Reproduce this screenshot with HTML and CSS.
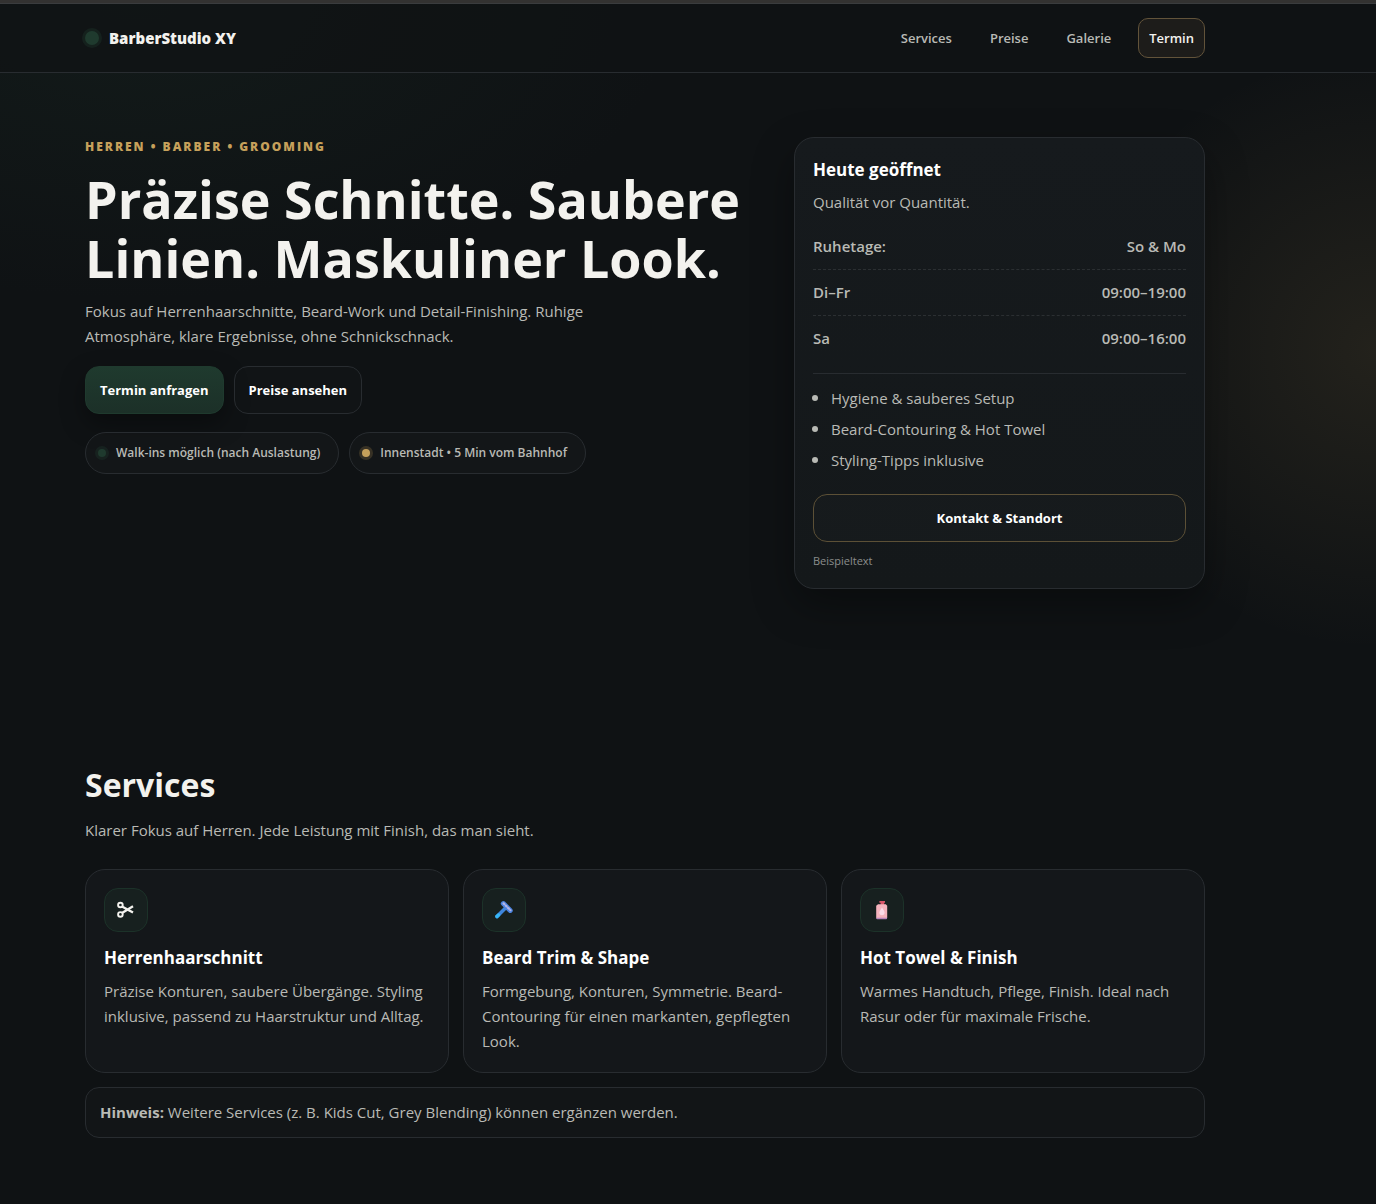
FILE: index.html
```
<!DOCTYPE html>
<html lang="de">
<head>
    <meta charset="UTF-8">
    <meta name="viewport" content="width=device-width, initial-scale=1">
    <title>BarberStudio XY</title>
    <link rel="stylesheet" href="styles.css">
</head>
<body>
    <header class="site-header">
        <div class="container header-inner">
            <a class="brand" href="#"><span class="brand-dot"></span>BarberStudio XY</a>
            <nav class="nav">
                <a href="#services">Services</a>
                <a href="#preise">Preise</a>
                <a href="#galerie">Galerie</a>
                <a class="nav-cta" href="#termin">Termin</a>
            </nav>
        </div>
    </header>

    <main>
        <section class="hero">
            <div class="container hero-grid">
                <div class="hero-text">
                    <p class="eyebrow">Herren • Barber • Grooming</p>
                    <h1>Präzise Schnitte. Saubere Linien. Maskuliner Look.</h1>
                    <p class="lead">Fokus auf Herrenhaarschnitte, Beard-Work und Detail-Finishing. Ruhige Atmosphäre, klare Ergebnisse, ohne Schnickschnack.</p>
                    <div class="actions">
                        <a class="btn btn-primary" href="#termin">Termin anfragen</a>
                        <a class="btn" href="#preise">Preise ansehen</a>
                    </div>
                    <div class="pills">
                        <span class="pill"><i class="dot"></i>Walk-ins möglich (nach Auslastung)</span>
                        <span class="pill"><i class="dot dot-gold"></i>Innenstadt • 5 Min vom Bahnhof</span>
                    </div>
                </div>

                <aside class="info-card">
                    <h3>Heute geöffnet</h3>
                    <p>Qualität vor Quantität.</p>
                    <table class="hours">
                        <tr><th scope="row">Ruhetage:</th><td>So &amp; Mo</td></tr>
                        <tr><th scope="row">Di–Fr</th><td>09:00–19:00</td></tr>
                        <tr><th scope="row">Sa</th><td>09:00–16:00</td></tr>
                    </table>
                    <ul class="perks">
                        <li>Hygiene &amp; sauberes Setup</li>
                        <li>Beard-Contouring &amp; Hot Towel</li>
                        <li>Styling-Tipps inklusive</li>
                    </ul>
                    <a class="btn btn-gold" href="#kontakt">Kontakt &amp; Standort</a>
                    <p class="small">Beispieltext</p>
                </aside>
            </div>
        </section>

        <section class="services" id="services">
            <div class="container">
                <h2>Services</h2>
                <p class="section-lead">Klarer Fokus auf Herren. Jede Leistung mit Finish, das man sieht.</p>
                <div class="cards">
                    <article class="card">
                        <div class="icon">
                            <svg width="20" height="18" viewBox="0 0 20 18" fill="none" stroke="#f3f2ee">
                                <circle cx="4.4" cy="4" r="2.3" stroke-width="1.9"/>
                                <circle cx="4.4" cy="13.4" r="2.3" stroke-width="1.9"/>
                                <path d="M6 5.4 17 11.6M6 12 17 5.2" stroke-width="2.3"/>
                            </svg>
                        </div>
                        <h3>Herrenhaarschnitt</h3>
                        <p>Präzise Konturen, saubere Übergänge. Styling inklusive, passend zu Haarstruktur und Alltag.</p>
                    </article>
                    <article class="card">
                        <div class="icon">
                            <svg width="20" height="20" viewBox="0 0 20 20" stroke-linecap="round">
                                <path d="M3 16.6 11.5 8.1" stroke="#3f86dd" stroke-width="3.6"/>
                                <path d="M3 16.6 4.5 15.1" stroke="#35b5f5" stroke-width="3.6"/>
                                <path d="M9.4 3.6 16.2 10.4" stroke="#4a83e0" stroke-width="5"/>
                                <path d="M9.6 3.4 16.4 10.2" stroke="#b3b4e6" stroke-width="2.2" stroke-dasharray="1 2.2"/>
                            </svg>
                        </div>
                        <h3>Beard Trim &amp; Shape</h3>
                        <p>Formgebung, Konturen, Symmetrie. Beard-Contouring für einen markanten, gepflegten Look.</p>
                    </article>
                    <article class="card">
                        <div class="icon">
                            <svg width="20" height="20" viewBox="0 0 20 20">
                                <path d="M7.4 1H13v1.8h-.8V5H8.6V2.8H7.4z" fill="#d9566a"/>
                                <path d="M6 4.2h7.8l1.4 1.6v12a1 1 0 0 1-1 1H5.2a1 1 0 0 1-1-1v-12z" fill="#f5b3bd"/>
                                <path d="M4.4 17.8H15v.6a.8.8 0 0 1-.8.8H5.2a.8.8 0 0 1-.8-.8z" fill="#b784bb"/>
                                <path d="M10 7.4c1.6 2.4 2.6 3.8 2.6 5.2a2.6 2.6 0 0 1-5.2 0c0-1.4 1-2.8 2.6-5.2z" fill="#fbdbe8"/>
                            </svg>
                        </div>
                        <h3>Hot Towel &amp; Finish</h3>
                        <p>Warmes Handtuch, Pflege, Finish. Ideal nach Rasur oder für maximale Frische.</p>
                    </article>
                </div>
                <div class="notice"><strong>Hinweis:</strong> Weitere Services (z. B. Kids Cut, Grey Blending) können ergänzen werden.</div>
            </div>
        </section>
    </main>
</body>
</html>
```
FILE: styles.css
```
:root {
    --bg: #0f1214;
    --text: #f3f2ee;
    --muted: #b9bab5;
    --line: #282c30;
    --green: #1f3a2e;
    --gold: #c6a15b;
}
* {
    margin: 0;
    padding: 0;
    box-sizing: border-box;
}
body {
    min-height: 100vh;
    font-family: "Open Sans", "Noto Sans", sans-serif;
    font-size: 15px;
    line-height: 25px;
    color: var(--text);
    background:
        radial-gradient(900px 500px at 10% 0, rgba(31, 58, 46, .22), transparent 60%),
        radial-gradient(500px 500px at 100% 350px, rgba(198, 161, 91, .11), transparent 60%),
        var(--bg);
}
a {
    color: inherit;
    text-decoration: none;
}
h3 {
    font-size: 17px;
    line-height: 28px;
}
.container {
    max-width: 1120px;
    margin: 0 86px 0 85px;
}

/* header */
.site-header {
    padding-top: 1px;
    border-top: 3px solid #333231;
    border-bottom: 1px solid var(--line);
    background: rgba(15, 18, 20, .7);
    box-shadow: inset 0 1px #3a3c3e;
}
.header-inner {
    display: flex;
    align-items: center;
    justify-content: space-between;
    padding: 14px 0;
}
.brand {
    display: flex;
    align-items: center;
    gap: 10px;
    font-weight: 800;
}
.brand-dot {
    width: 14px;
    height: 14px;
    border-radius: 50%;
    background: var(--green);
    box-shadow: 0 0 0 3px rgba(31, 58, 46, .35);
}
.nav {
    display: flex;
    gap: 16px;
    font-size: 13px;
    font-weight: 600;
    line-height: 18px;
    color: var(--muted);
}
.nav a {
    padding: 10px;
    border: 1px solid transparent;
    border-radius: 10px;
}
.nav .nav-cta {
    color: var(--text);
    border-color: #62533a;
    background: #1d1c1a;
}

/* hero */
.hero {
    padding: 64px 0;
}
.hero-grid {
    display: grid;
    grid-template-columns: 5fr 3fr;
    gap: 24px;
}
.eyebrow {
    font-size: 12px;
    font-weight: 800;
    line-height: 20px;
    letter-spacing: 2px;
    text-transform: uppercase;
    color: var(--gold);
}
h1 {
    margin: 12px 0;
    font-size: 52px;
    line-height: 59px;
}
.lead {
    max-width: 540px;
    color: var(--muted);
}
.actions,
.pills {
    display: flex;
    flex-wrap: wrap;
    gap: 10px;
}
.actions {
    margin: 17px 0 18px;
}
.btn {
    padding: 11px 14px;
    border: 1px solid var(--line);
    border-radius: 14px;
    background: rgba(255, 255, 255, .01);
    font-size: 13px;
    font-weight: 700;
    line-height: 24px;
    color: #fff;
    text-align: center;
}
.btn-primary {
    border-color: var(--green);
    background: linear-gradient(#1f3a2e, #1c3028);
    box-shadow: 0 10px 24px rgba(0, 0, 0, .35);
}
.btn-gold {
    display: block;
    border-color: #5c5036;
}
.pill {
    display: flex;
    align-items: center;
    gap: 10px;
    padding: 10px 18px 10px 12px;
    border: 1px solid var(--line);
    border-radius: 21px;
    background: rgba(255, 255, 255, .02);
    font-size: 12px;
    font-weight: 600;
    line-height: 20px;
    color: var(--muted);
}
.dot {
    width: 8px;
    height: 8px;
    border-radius: 50%;
    background: var(--green);
    box-shadow: 0 0 0 3px rgba(31, 58, 46, .35);
}
.dot-gold {
    background: var(--gold);
    box-shadow: 0 0 0 3px rgba(198, 161, 91, .2);
}

/* opening hours */
.info-card {
    padding: 18px;
    border: 1px solid var(--line);
    border-radius: 20px;
    background: linear-gradient(#161a1d, #14181a);
    box-shadow: 0 16px 40px rgba(0, 0, 0, .35);
    color: var(--muted);
}
.info-card h3 {
    margin-bottom: 6px;
    color: #fff;
}
.hours {
    width: 100%;
    margin-top: 9px;
    border-collapse: collapse;
}
.hours th,
.hours td {
    padding: 10px 0;
    font-weight: 600;
    text-align: left;
}
.hours td {
    text-align: right;
}
.hours tr + tr {
    border-top: 1px dashed #2b2f32;
}
.perks {
    margin: 12px 0 21px;
    padding: 11px 0 0 18px;
    border-top: 1px solid var(--line);
}
.perks li + li {
    margin-top: 5px;
}
.perks li::marker {
    font-size: 18px;
}
.info-card .small {
    margin-top: 10px;
    font-size: 11px;
    line-height: 18px;
    color: #8b8e8c;
}

/* services */
.services {
    padding: 110px 0 64px;
}
h2 {
    font-size: 32px;
    line-height: 44px;
}
.section-lead {
    margin: 11px 0 26px;
    color: var(--muted);
}
.cards {
    display: grid;
    grid-template-columns: repeat(3, 1fr);
    gap: 14px;
}
.card {
    padding: 18px;
    border: 1px solid var(--line);
    border-radius: 20px;
    background: #14171a;
    color: var(--muted);
}
.card h3 {
    margin: 12px 0 7px;
    color: #fff;
}
.icon {
    display: grid;
    place-items: center;
    width: 44px;
    height: 44px;
    border: 1px solid #1c3229;
    border-radius: 14px;
    background: #17201f;
}
.notice {
    margin-top: 14px;
    padding: 12px 14px;
    border: 1px solid var(--line);
    border-radius: 14px;
    background: #121517;
    color: var(--muted);
}

@media (max-width: 900px) {
    .container {
        margin: 0 20px;
    }
    .hero-grid,
    .cards {
        grid-template-columns: 1fr;
    }
}
```
